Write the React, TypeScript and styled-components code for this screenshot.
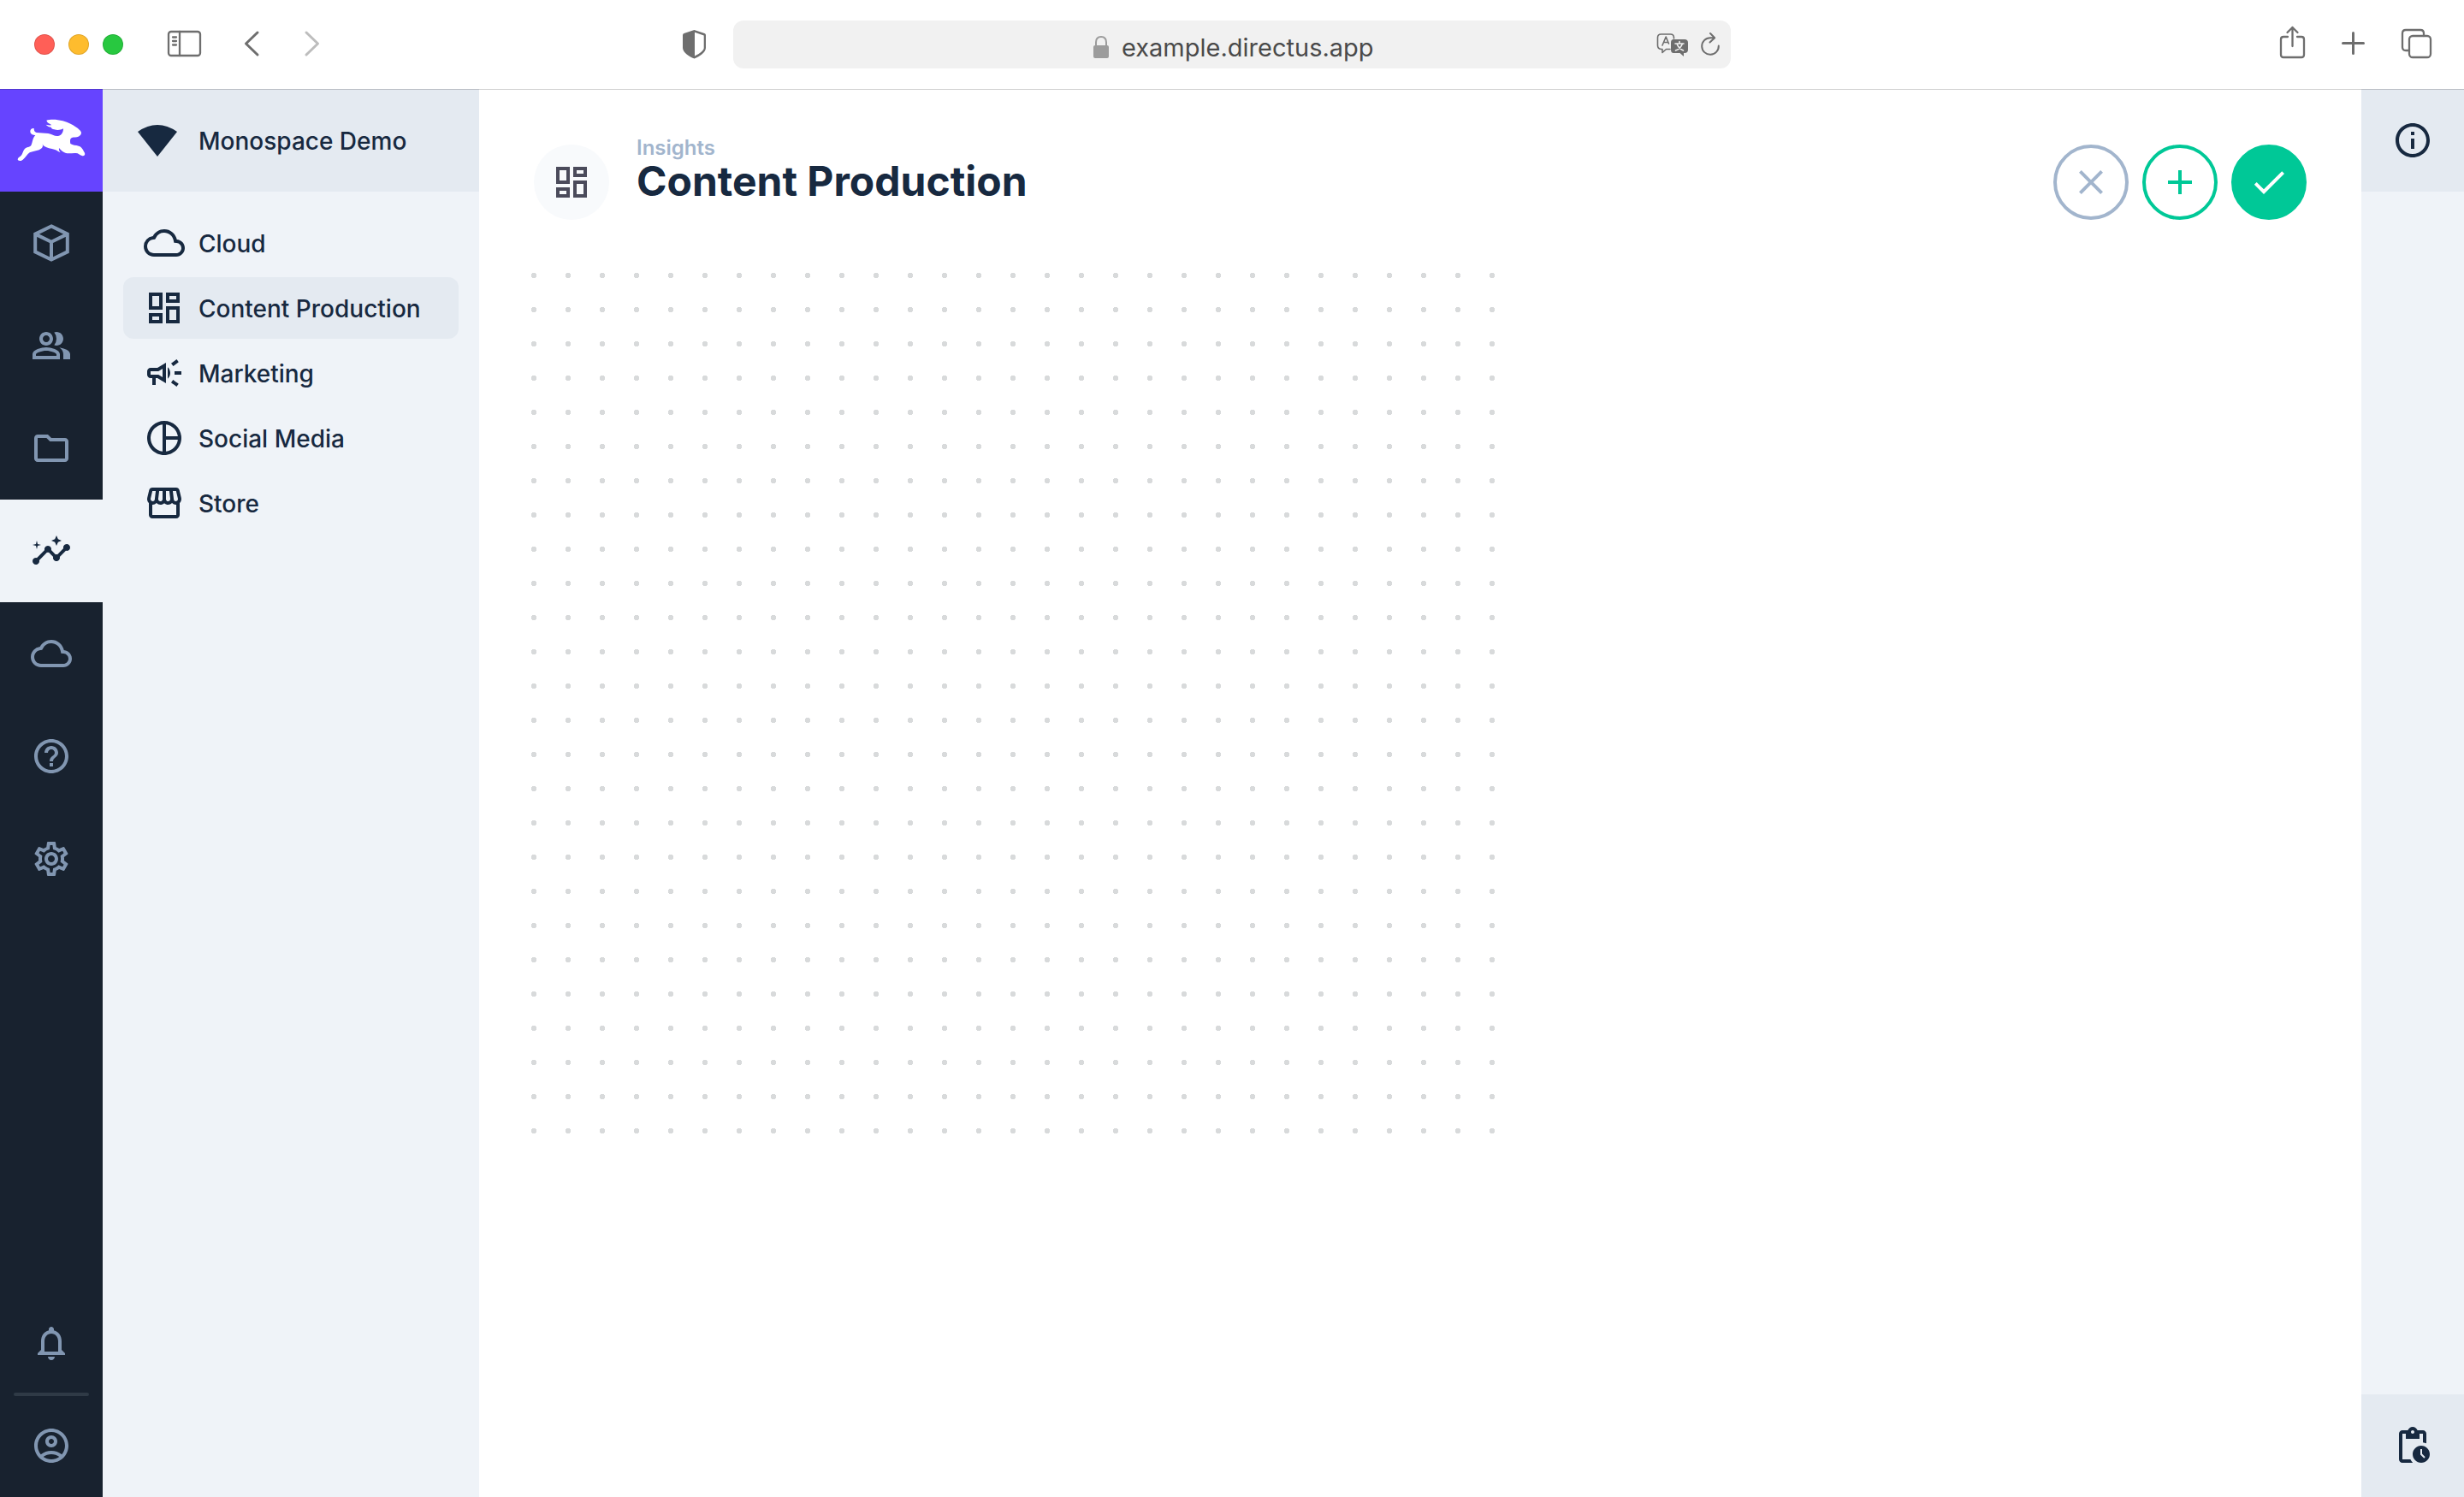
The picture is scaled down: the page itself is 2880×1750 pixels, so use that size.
import React from "react";
import styled, { createGlobalStyle } from "styled-components";
import {
  MdInsights,
  MdNotificationsNone,
  MdOutlineAccountCircle,
  MdOutlineCampaign,
  MdOutlineCloud,
  MdOutlineDashboard,
  MdOutlineFolder,
  MdOutlineHelpOutline,
  MdOutlineInfo,
  MdOutlinePeopleAlt,
  MdOutlinePendingActions,
  MdOutlinePieChart,
  MdOutlineSettings,
  MdOutlineStorefront,
  MdAdd,
  MdCheck,
  MdClose,
} from "react-icons/md";

const color = {
  ink: "#172940",
  rail: "#18222f",
  railIcon: "#8196b1",
  brand: "#6644ff",
  panel: "#eff3f8",
  panelStrong: "#e4eaf1",
  green: "#00c897",
  muted: "#a2b5cd",
  chrome: "#6e6e6e",
};

const GlobalStyle = createGlobalStyle`
  * { box-sizing: border-box; }
  body {
    margin: 0;
    background: #fff;
    color: ${color.ink};
    font-family: Inter, "Open Sans", sans-serif;
    font-size: 28px;
    font-weight: 500;
  }
  button, input { font: inherit; }
  svg { display: block; flex: none; }
`;

const Window = styled.div`
  display: flex;
  flex-direction: column;
  height: 100vh;
  overflow: hidden;
`;

/* Browser toolbar */

const Toolbar = styled.header`
  display: grid;
  grid-template-columns: 1fr minmax(0, 1166px) 1fr;
  align-items: center;
  height: 104px;
  flex: none;
`;

const ToolbarSide = styled.div<{ $end?: boolean }>`
  display: flex;
  align-items: center;
  justify-content: ${(p) => (p.$end ? "flex-end" : "flex-start")};
  gap: 24px;
  padding: ${(p) => (p.$end ? "0 32px 0 0" : "0 22px 0 40px")};
`;

const Lights = styled.div`
  display: flex;
  gap: 16px;
`;

const Light = styled.button<{ $fill: string }>`
  width: 24px;
  height: 24px;
  padding: 0;
  border: 1px solid rgba(0, 0, 0, 0.12);
  border-radius: 50%;
  background: ${(p) => p.$fill};
`;

const PanelToggle = styled.div`
  display: flex;
  padding: 0 8px 0 24px;
`;

const ToolButton = styled.button<{ $faded?: boolean; $push?: boolean }>`
  width: 48px;
  height: 48px;
  padding: 0;
  border: 0;
  background: none;
  color: ${(p) => (p.$faded ? "#bdbdbd" : color.chrome)};
  margin-left: ${(p) => (p.$push ? "auto" : "0")};
`;

const AddressBar = styled.form`
  display: grid;
  grid-template-columns: 1fr auto 1fr;
  align-items: center;
  height: 56px;
  padding: 6px 4px 0 12px;
  border-radius: 12px;
  background: #f1f1f1;
`;

const Address = styled.label`
  grid-column: 2;
  display: flex;
  align-items: center;
  gap: 14px;
  color: #9c9c9c;
`;

const AddressInput = styled.input`
  width: 300px;
  height: 40px;
  padding: 0;
  border: 0;
  background: none;
  color: #4a4a4a;
  font-size: 29px;
  font-weight: 400;
`;

const AddressActions = styled.div`
  display: flex;
  justify-content: flex-end;
  gap: 4px;
`;

const SmallTool = styled.button`
  width: 40px;
  height: 40px;
  padding: 0;
  border: 0;
  background: none;
  color: ${color.chrome};
`;

/* Application shell */

const Shell = styled.div`
  display: grid;
  grid-template-columns: 120px 440px minmax(0, 1fr) 120px;
  flex: 1;
  min-height: 0;
  position: relative;

  &::before {
    content: "";
    position: absolute;
    inset: 0 0 auto;
    height: 1px;
    background: rgba(0, 0, 0, 0.18);
  }
`;

const Rail = styled.nav`
  display: flex;
  flex-direction: column;
  background: ${color.rail};
`;

const RailLink = styled.a<{ $active?: boolean; $brand?: boolean }>`
  display: flex;
  align-items: center;
  justify-content: center;
  height: 120px;
  color: ${(p) => (p.$active ? color.ink : color.railIcon)};
  background: ${(p) =>
    p.$brand ? color.brand : p.$active ? color.panel : "transparent"};
`;

const RailFoot = styled.div`
  margin-top: auto;
`;

const RailDivider = styled.hr`
  height: 4px;
  margin: -2px 16px;
  border: 0;
  border-radius: 2px;
  background: #2f3a46;
`;

const Navigation = styled.aside`
  background: ${color.panel};
`;

const Project = styled.div`
  display: flex;
  align-items: center;
  gap: 24px;
  height: 120px;
  padding: 0 40px;
  background: ${color.panelStrong};
`;

const NavList = styled.ul`
  display: flex;
  flex-direction: column;
  gap: 4px;
  margin: 0;
  padding: 24px;
  list-style: none;
`;

const NavLink = styled.a<{ $active?: boolean }>`
  display: flex;
  align-items: center;
  gap: 16px;
  height: 72px;
  padding: 0 24px;
  border-radius: 12px;
  color: inherit;
  text-decoration: none;
  white-space: nowrap;
  background: ${(p) => (p.$active ? color.panelStrong : "transparent")};
`;

const Label = styled.span`
  padding-top: 2px;
`;

const Main = styled.main`
  background: #fff;
  overflow: hidden;
`;

const PageHeader = styled.header`
  display: flex;
  align-items: flex-end;
  gap: 32px;
  padding: 57px 64px 45px;
`;

const PageIcon = styled.div`
  display: flex;
  align-items: center;
  justify-content: center;
  width: 88px;
  height: 88px;
  border-radius: 50%;
  background: #f8fafc;
  color: #4b4b5b;
`;

const Titles = styled.div`
  padding-bottom: 18px;
`;

const Crumb = styled.a`
  display: block;
  color: ${color.muted};
  font-size: 24px;
  font-weight: 600;
  line-height: 24px;
  text-decoration: none;
`;

const Title = styled.h1`
  margin: 0;
  font-size: 48px;
  font-weight: 700;
  line-height: 54px;
`;

const Actions = styled.div`
  display: flex;
  gap: 16px;
  margin-left: auto;
`;

const RoundButton = styled.button<{ $tone: string; $solid?: boolean }>`
  display: flex;
  align-items: center;
  justify-content: center;
  width: 88px;
  height: 88px;
  padding: 0;
  border: 4px solid ${(p) => p.$tone};
  border-radius: 50%;
  background: ${(p) => (p.$solid ? p.$tone : "transparent")};
  color: ${(p) => (p.$solid ? "#fff" : p.$tone)};
`;

const Workspace = styled.section`
  width: 1160px;
  height: 1040px;
  margin: 0 44px;
  background-image: radial-gradient(circle, #d8dadb 3px, transparent 3px);
  background-size: 40px 40px;
`;

const Sidebar = styled.aside`
  display: flex;
  flex-direction: column;
  justify-content: space-between;
  background: ${color.panel};
`;

const SidebarButton = styled.button`
  display: flex;
  align-items: center;
  justify-content: center;
  height: 120px;
  padding: 0;
  border: 0;
  background: ${color.panelStrong};
  color: ${color.ink};
`;

const Line = ({ children, w = 2.3 }: { children: React.ReactNode; w?: number }) => (
  <svg
    width="48"
    height="48"
    viewBox="0 0 48 48"
    fill="none"
    stroke="currentColor"
    strokeWidth={w}
    strokeLinecap="round"
    strokeLinejoin="round"
  >
    {children}
  </svg>
);

const Rabbit = () => (
  <svg width="120" height="120" viewBox="0 312 360 360" fill="#fff">
    <path d="M163 422C176 418 200 418 220 424C240 430 254 437 265 445C274 451 285 459 285 466C285 473 279 479 270 481C262 482 252 481 248 486C245 491 246 498 247 504C255 510 266 509 276 512C288 516 291 526 297 536C300 544 294 548 287 546C279 544 275 537 266 537C253 536 240 540 229 536C221 533 213 527 207 519C206 526 208 530 212 535C205 533 201 527 193 525C179 521 164 520 152 511L149 505C151 511 150 516 146 520C136 530 116 530 104 535C95 541 90 552 80 560C75 565 68 565 63 562C61 558 63 554 67 551C80 545 79 530 87 522C93 515 104 517 109 510C115 499 113 485 124 474C117 474 107 471 106 462C105 454 112 449 119 450C119 458 121 463 128 465C142 466 155 467 169 468C182 470 192 479 204 477C218 474 222 462 222 451C213 456 201 457 190 454C184 453 180 450 179 446C173 446 166 443 161 437C168 439 174 440 181 439C177 434 166 433 163 422Z" />
  </svg>
);

const Cube = () => (
  <svg
    width="48"
    height="48"
    viewBox="0 0 48 48"
    fill="none"
    stroke="currentColor"
    strokeWidth="4"
  >
    <path d="M24 4.4 42.8 13.6V34.4L24 43.6 5.2 34.4V13.6ZM5.2 13.6 24 22.8 42.8 13.6M24 22.8V43.6" />
  </svg>
);

const Fan = () => (
  <svg width="48" height="48" viewBox="0 0 48 48" fill="currentColor">
    <path d="M1 14Q24 -2 47 14L24 43Z" />
  </svg>
);

const ShieldIcon = () => (
  <svg width="48" height="48" viewBox="0 0 48 48" fill="currentColor">
    <path
      fillRule="evenodd"
      d="M24.5 7 36.5 11Q38 11.5 38 13V28C38 33 31 38 24.5 40.5C18 38 11 33 11 28V13Q11 11.5 12.5 11ZM25 9.8V37.5C31 34.5 35.7 31 35.7 28V13.6Z"
    />
  </svg>
);

const LockIcon = () => (
  <svg width="20" height="28" viewBox="0 0 20 28">
    <rect x="1" y="12" width="18" height="15" rx="2" fill="currentColor" />
    <path
      d="M4 13V8.5C4 4 6.5 2 10 2S16 4 16 8.5V13"
      fill="none"
      stroke="currentColor"
      strokeWidth="2"
    />
  </svg>
);

const TranslateIcon = () => (
  <svg
    width="40"
    height="40"
    viewBox="0 0 40 40"
    fill="none"
    stroke="currentColor"
    strokeWidth="1.6"
    strokeLinecap="round"
    strokeLinejoin="round"
  >
    <path d="M17 22.5H12.5L8 26.5V22.5H6.5Q2.5 22 2.5 18V9Q2.5 5 6.5 5H17.5Q21.5 5 21.5 9V10" />
    <path d="M8 18 12.2 8 15.5 16M9.5 14.5H14.8" />
    <path
      d="M21 11H34Q38 11 38 15V23Q38 27 34 27H33V31L28.5 27H21Q18 27 18 23V15Q18 11 21 11Z"
      fill="currentColor"
      stroke="none"
    />
    <path
      d="M23 16H33M28 13.5V16M31.5 16C30 20 27 23 23.5 24M25 16C26 19 29 22.5 32.5 24"
      stroke="#f1f1f1"
    />
  </svg>
);

const ReloadIcon = () => (
  <svg
    width="40"
    height="40"
    viewBox="0 0 40 40"
    fill="none"
    stroke="currentColor"
    strokeWidth="2"
    strokeLinecap="round"
    strokeLinejoin="round"
  >
    <path d="M29.8 18.5A9.8 9.8 0 1 1 20 9.2H25M20 4 25.2 9.2 19.5 14.5" />
  </svg>
);

const railItems = [
  { label: "Content", icon: <Cube /> },
  { label: "Users", icon: <MdOutlinePeopleAlt size={48} /> },
  { label: "Files", icon: <MdOutlineFolder size={48} /> },
  { label: "Insights", icon: <MdInsights size={48} />, active: true },
  { label: "Cloud", icon: <MdOutlineCloud size={48} /> },
  { label: "Help", icon: <MdOutlineHelpOutline size={48} /> },
  { label: "Settings", icon: <MdOutlineSettings size={48} /> },
];

const dashboards = [
  { label: "Cloud", Icon: MdOutlineCloud },
  { label: "Content Production", Icon: MdOutlineDashboard, active: true },
  { label: "Marketing", Icon: MdOutlineCampaign },
  { label: "Social Media", Icon: MdOutlinePieChart },
  { label: "Store", Icon: MdOutlineStorefront },
];

export default function App() {
  return (
    <Window>
      <GlobalStyle />
      <Toolbar>
        <ToolbarSide>
          <Lights>
            <Light $fill="#ff5f57" aria-label="Close window" />
            <Light $fill="#febc2e" aria-label="Minimize window" />
            <Light $fill="#28c840" aria-label="Zoom window" />
          </Lights>
          <PanelToggle>
            <ToolButton aria-label="Show sidebar">
              <Line>
                <rect x="5" y="9" width="37" height="28" rx="3" />
                <path d="M18 9V37M10 15.5H14M10 20H14M10 24.5H14" />
              </Line>
            </ToolButton>
          </PanelToggle>
          <ToolButton aria-label="Back">
            <Line w={3}>
              <path d="M29 10 15.5 23 29 36" />
            </Line>
          </ToolButton>
          <ToolButton aria-label="Forward" $faded>
            <Line w={3}>
              <path d="M14 10 27.5 23 14 36" />
            </Line>
          </ToolButton>
          <ToolButton aria-label="Privacy report" $push>
            <ShieldIcon />
          </ToolButton>
        </ToolbarSide>
        <AddressBar>
          <Address>
            <LockIcon />
            <AddressInput aria-label="Address" defaultValue="example.directus.app" />
          </Address>
          <AddressActions>
            <SmallTool type="button" aria-label="Translate">
              <TranslateIcon />
            </SmallTool>
            <SmallTool type="button" aria-label="Reload">
              <ReloadIcon />
            </SmallTool>
          </AddressActions>
        </AddressBar>
        <ToolbarSide $end>
          <ToolButton aria-label="Share">
            <Line>
              <path d="M18 15H13Q10 15 10 18V36Q10 39 13 39H34Q37 39 37 36V18Q37 15 34 15H29M23.5 26V4M17.5 10 23.5 4 29.5 10" />
            </Line>
          </ToolButton>
          <ToolButton aria-label="New tab">
            <Line w={3}>
              <path d="M10.5 22.5H34.5M22.5 10.5V34.5" />
            </Line>
          </ToolButton>
          <ToolButton aria-label="Tab overview">
            <Line>
              <rect x="16" y="14" width="25" height="25" rx="4" />
              <path d="M16 31H12Q8 31 8 27V11Q8 7 12 7H29Q33 7 33 11V14" />
            </Line>
          </ToolButton>
        </ToolbarSide>
      </Toolbar>

      <Shell>
        <Rail aria-label="Modules">
          <RailLink href="#home" aria-label="Home" $brand>
            <Rabbit />
          </RailLink>
          {railItems.map((item) => (
            <RailLink
              key={item.label}
              href={`#${item.label.toLowerCase()}`}
              aria-label={item.label}
              $active={item.active}
            >
              {item.icon}
            </RailLink>
          ))}
          <RailFoot>
            <RailLink href="#notifications" aria-label="Notifications">
              <MdNotificationsNone size={48} />
            </RailLink>
            <RailDivider />
            <RailLink href="#account" aria-label="Account">
              <MdOutlineAccountCircle size={48} />
            </RailLink>
          </RailFoot>
        </Rail>

        <Navigation>
          <Project>
            <Fan />
            <Label>Monospace Demo</Label>
          </Project>
          <NavList>
            {dashboards.map(({ label, Icon, active }) => (
              <li key={label}>
                <NavLink href="#dashboard" $active={active}>
                  <Icon size={48} />
                  <Label>{label}</Label>
                </NavLink>
              </li>
            ))}
          </NavList>
        </Navigation>

        <Main>
          <PageHeader>
            <PageIcon>
              <MdOutlineDashboard size={48} />
            </PageIcon>
            <Titles>
              <Crumb href="#insights">Insights</Crumb>
              <Title>Content Production</Title>
            </Titles>
            <Actions>
              <RoundButton $tone={color.muted} aria-label="Cancel">
                <MdClose size={48} />
              </RoundButton>
              <RoundButton $tone={color.green} aria-label="Create panel">
                <MdAdd size={48} />
              </RoundButton>
              <RoundButton $tone={color.green} $solid aria-label="Save">
                <MdCheck size={48} />
              </RoundButton>
            </Actions>
          </PageHeader>
          <Workspace aria-label="Dashboard workspace" />
        </Main>

        <Sidebar>
          <SidebarButton aria-label="Information">
            <MdOutlineInfo size={48} />
          </SidebarButton>
          <SidebarButton aria-label="Activity">
            <MdOutlinePendingActions size={48} />
          </SidebarButton>
        </Sidebar>
      </Shell>
    </Window>
  );
}
